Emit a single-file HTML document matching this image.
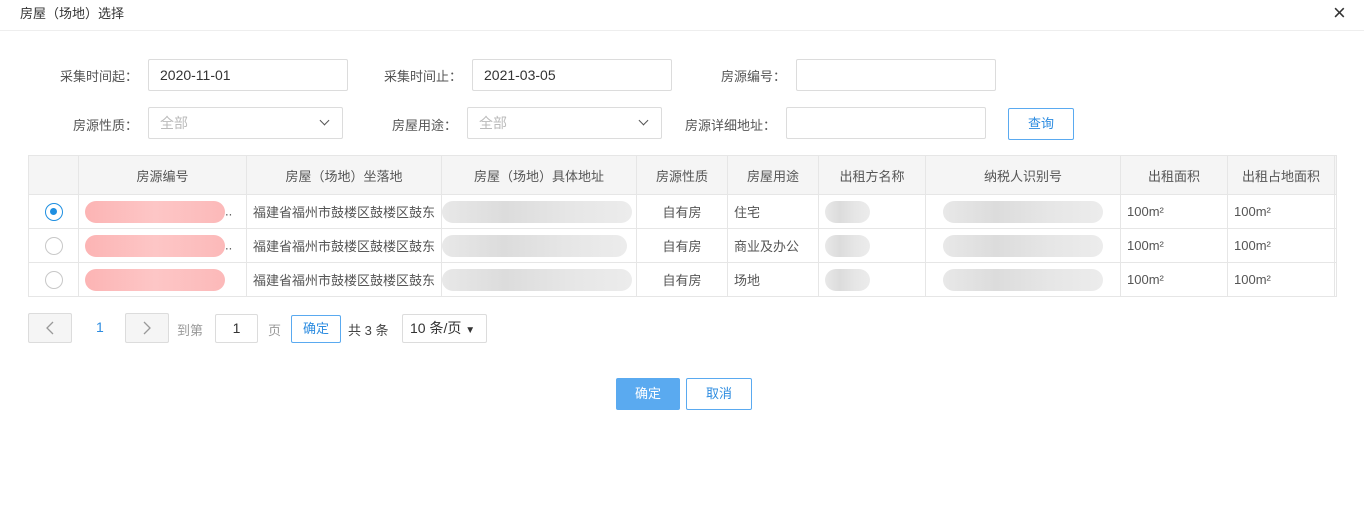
<!DOCTYPE html>
<html><head><meta charset="utf-8"><style>
*{box-sizing:border-box;margin:0;padding:0}
body{width:1364px;height:507px;background:#fff;font-family:"Liberation Sans","Noto Sans CJK SC",sans-serif;font-size:13px;color:#333;position:relative;overflow:hidden}
.a{position:absolute}
.lbl{position:absolute;color:#555;font-size:13px;text-align:right}
.inp{position:absolute;border:1px solid #dcdcdc;border-radius:2px;height:32px;line-height:30px;padding-left:11px;font-size:14px;color:#333}
.sel{color:#bbb}
.chev{position:absolute;right:14px;top:9px;width:7px;height:7px;border-right:1.5px solid #555;border-bottom:1.5px solid #555;transform:rotate(45deg)}
table{position:absolute;left:28px;top:155px;border-collapse:collapse;width:1308px;table-layout:fixed}
td,th{border:1px solid #e6e6e6;height:34px;font-size:13px;color:#555;font-weight:normal;white-space:nowrap;overflow:hidden;padding:0 6px}
th{background:#f5f5f5;height:39px;text-align:center}
.c{text-align:center}
.blur{display:inline-block;height:22px;border-radius:11px;vertical-align:middle}
.r{background:linear-gradient(90deg,#fcb4b4,#fdc6c6,#fcb9b9)}
.g{background:linear-gradient(90deg,#e8e8e8,#dcdcdc,#e6e6e6,#ececec)}
.radio{display:inline-block;width:18px;height:18px;border-radius:50%;border:1.5px solid #c8c8c8;vertical-align:middle;position:relative}
.radio.on{border-color:#1e8fe1}
.radio.on::after{content:"";position:absolute;left:4px;top:4px;width:7px;height:7px;border-radius:50%;background:#1e8fe1}
.btn{position:absolute;border:1px solid #dcdcdc;border-radius:2px;text-align:center;font-size:13px}
</style></head><body>
<div class="a" style="left:20px;top:3px;font-size:13px;color:#333">房屋（场地）选择</div>
<div class="a" style="left:1333px;top:0;font-size:22px;color:#333">×</div>
<div class="a" style="left:0;top:30px;width:1364px;border-top:1px solid #eee"></div>

<div class="lbl" style="left:40px;top:66px;width:98px">采集时间起：</div>
<div class="inp" style="left:148px;top:59px;width:200px">2020-11-01</div>
<div class="lbl" style="left:360px;top:66px;width:102px">采集时间止：</div>
<div class="inp" style="left:472px;top:59px;width:200px">2021-03-05</div>
<div class="lbl" style="left:690px;top:66px;width:96px">房源编号：</div>
<div class="inp" style="left:796px;top:59px;width:200px"></div>

<div class="lbl" style="left:40px;top:115px;width:98px">房源性质：</div>
<div class="inp sel" style="left:148px;top:107px;width:195px">全部<span class="chev"></span></div>
<div class="lbl" style="left:360px;top:115px;width:97px">房屋用途：</div>
<div class="inp sel" style="left:467px;top:107px;width:195px">全部<span class="chev"></span></div>
<div class="lbl" style="left:670px;top:115px;width:106px">房源详细地址：</div>
<div class="inp" style="left:786px;top:107px;width:200px"></div>
<div class="btn" style="left:1008px;top:108px;width:66px;height:32px;line-height:30px;border-color:#5aaaf0;color:#2d8ce0">查询</div>

<table>
<colgroup><col style="width:50px"><col style="width:168px"><col style="width:195px"><col style="width:195px"><col style="width:91px"><col style="width:91px"><col style="width:107px"><col style="width:195px"><col style="width:107px"><col style="width:107px"><col style="width:2px"></colgroup>
<tr><th></th><th>房源编号</th><th>房屋（场地）坐落地</th><th>房屋（场地）具体地址</th><th>房源性质</th><th>房屋用途</th><th>出租方名称</th><th>纳税人识别号</th><th>出租面积</th><th>出租占地面积</th><th></th></tr>
<tr><td class="c"><span class="radio on"></span></td><td><span class="blur r" style="width:140px"></span>..</td><td>福建省福州市鼓楼区鼓楼区鼓东</td><td style="padding:0"><span class="blur g" style="width:190px"></span></td><td class="c">自有房</td><td>住宅</td><td><span class="blur g" style="width:45px"></span></td><td class="c"><span class="blur g" style="width:160px"></span></td><td>100m²</td><td>100m²</td><td></td></tr>
<tr><td class="c"><span class="radio"></span></td><td><span class="blur r" style="width:140px"></span>..</td><td>福建省福州市鼓楼区鼓楼区鼓东</td><td style="padding:0"><span class="blur g" style="width:185px"></span></td><td class="c">自有房</td><td>商业及办公</td><td><span class="blur g" style="width:45px"></span></td><td class="c"><span class="blur g" style="width:160px"></span></td><td>100m²</td><td>100m²</td><td></td></tr>
<tr><td class="c"><span class="radio"></span></td><td><span class="blur r" style="width:140px"></span></td><td>福建省福州市鼓楼区鼓楼区鼓东</td><td style="padding:0"><span class="blur g" style="width:190px"></span></td><td class="c">自有房</td><td>场地</td><td><span class="blur g" style="width:45px"></span></td><td class="c"><span class="blur g" style="width:160px"></span></td><td>100m²</td><td>100m²</td><td></td></tr>
</table>

<div class="btn" style="left:28px;top:313px;width:44px;height:30px;background:#f5f5f5"><svg width="42" height="28"><path d="M24 8 L18 14 L24 20" fill="none" stroke="#999" stroke-width="1.3"/></svg></div>
<div class="a" style="left:96px;top:319px;color:#2d8ce0;font-size:14px">1</div>
<div class="btn" style="left:125px;top:313px;width:44px;height:30px;background:#f5f5f5"><svg width="42" height="28"><path d="M18 8 L24 14 L18 20" fill="none" stroke="#999" stroke-width="1.3"/></svg></div>
<div class="a" style="left:177px;top:320px;color:#999">到第</div>
<div class="btn" style="left:215px;top:314px;width:43px;height:29px;line-height:27px;font-size:14px;color:#333">1</div>
<div class="a" style="left:268px;top:320px;color:#999">页</div>
<div class="btn" style="left:291px;top:315px;width:50px;height:28px;line-height:26px;border-color:#5aaaf0;color:#2d8ce0">确定</div>
<div class="a" style="left:348px;top:320px;color:#444">共 3 条</div>
<div class="btn" style="left:402px;top:314px;width:85px;height:29px;line-height:27px;font-size:14px;color:#333;text-align:left;padding-left:7px">10 条/页 <span style="font-size:10px">▼</span></div>

<div class="btn" style="left:616px;top:378px;width:64px;height:32px;line-height:30px;background:#5aaaf0;border-color:#5aaaf0;color:#fff">确定</div>
<div class="btn" style="left:686px;top:378px;width:66px;height:32px;line-height:30px;border-color:#5aaaf0;color:#2d8ce0">取消</div>
</body></html>
